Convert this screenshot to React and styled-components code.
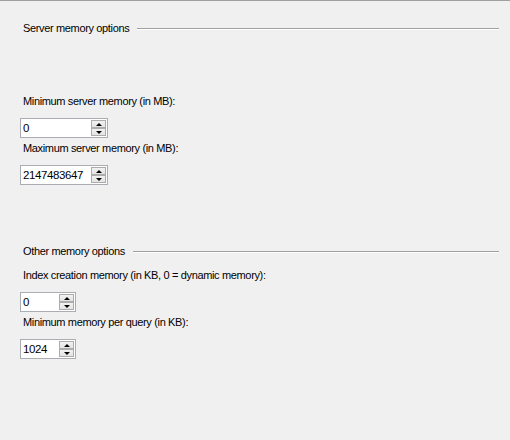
import styled, { createGlobalStyle } from "styled-components";

const GlobalStyle = createGlobalStyle`
  html, body {
    margin: 0;
    padding: 0;
    background: #f0f0f0;
  }
  body {
    font-family: "Liberation Sans", Arial, sans-serif;
    font-size: 11px;
    letter-spacing: -0.35px;
    color: #000;
  }
`;

const Page = styled.div`
  width: 510px;
  height: 440px;
  box-sizing: border-box;
  border-top: 1px solid #a0a0a0;
  background: #f0f0f0;
  padding: 21px 11px 0 20px;
  display: flex;
  flex-direction: column;
`;

const Section = styled.div`
  display: flex;
  flex-direction: column;
  margin-top: ${(p) => p.$top || 0}px;
`;

const Header = styled.div`
  display: flex;
  align-items: center;
  height: 13px;
  margin-left: 3px;
  margin-bottom: ${(p) => p.$gap}px;
`;

const HeaderText = styled.span`
  line-height: 13px;
  white-space: nowrap;
  margin-right: 8px;
`;

const Rule = styled.div`
  flex: 1;
  height: 1px;
  background: #a0a0a0;
  border-bottom: 1px solid #ffffff;
  margin-top: 1px;
`;

const Label = styled.div`
  line-height: 13px;
  margin-left: 3px;
  margin-top: ${(p) => p.$top || 0}px;
  margin-bottom: 10px;
  white-space: nowrap;
`;

const Spinner = styled.div`
  width: ${(p) => p.$width}px;
  height: 20px;
  box-sizing: border-box;
  border: 1px solid #abadb3;
  background: #fff;
  display: flex;
  align-items: stretch;
  padding: 1px 1px 1px 2px;
`;

const Value = styled.div`
  flex: 1;
  font-size: 11.5px;
  letter-spacing: -0.4px;
  line-height: 16px;
`;

const Buttons = styled.div`
  width: 15px;
  display: flex;
  flex-direction: column;
`;

const SpinButton = styled.div`
  flex: 1;
  box-sizing: border-box;
  border: 1px solid #acacac;
  background: linear-gradient(#f2f2f2, #e3e3e3);
  display: flex;
  align-items: center;
  justify-content: center;
  &::after {
    content: "";
    width: 0;
    height: 0;
    border-left: 3px solid transparent;
    border-right: 3px solid transparent;
    ${(p) =>
      p.$down
        ? "border-top: 3px solid #000;"
        : "border-bottom: 3px solid #000;"}
  }
`;

const NumberBox = ({ width, value }) => (
  <Spinner $width={width}>
    <Value>{value}</Value>
    <Buttons>
      <SpinButton />
      <SpinButton $down />
    </Buttons>
  </Spinner>
);

export default function App() {
  return (
    <>
      <GlobalStyle />
      <Page>
        <Section>
          <Header $gap={60}>
            <HeaderText>Server memory options</HeaderText>
            <Rule />
          </Header>
          <Label>Minimum server memory (in MB):</Label>
          <NumberBox width={88} value="0" />
          <Label $top={4}>Maximum server memory (in MB):</Label>
          <NumberBox width={88} value="2147483647" />
        </Section>
        <Section $top={60}>
          <Header $gap={11}>
            <HeaderText>Other memory options</HeaderText>
            <Rule />
          </Header>
          <Label>Index creation memory (in KB, 0 = dynamic memory):</Label>
          <NumberBox width={56} value="0" />
          <Label $top={4}>Minimum memory per query (in KB):</Label>
          <NumberBox width={56} value="1024" />
        </Section>
      </Page>
    </>
  );
}
